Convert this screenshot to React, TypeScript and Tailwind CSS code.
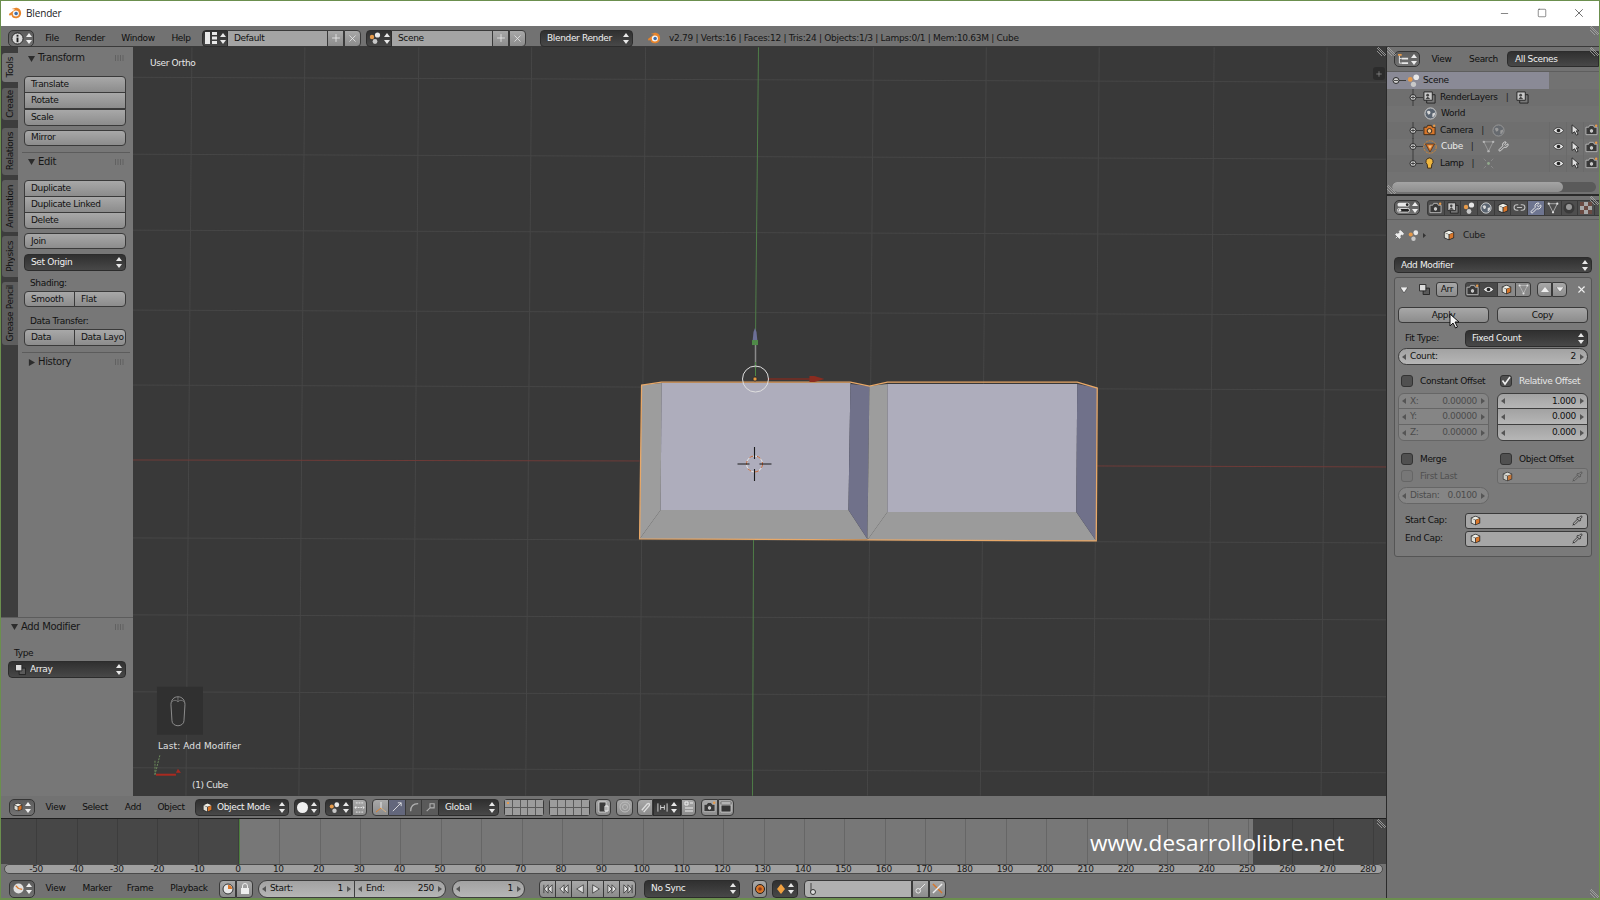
import type { ReactNode } from 'react'
import { Link2, Minus, Pin, Pipette, Plus, Square, Wrench, X } from 'lucide-react'

const btnBg = 'bg-linear-to-b from-[#a8a8a8] to-[#8c8c8c] border border-[#3a3a3a] text-[#111]'
const midBg = 'bg-linear-to-b from-[#5c5c5c] to-[#727272] border border-[#353535] text-[#eee]'
const darkBg = 'bg-linear-to-b from-[#303030] to-[#484848] border border-[#2c2c2c] text-[#f0f0f0]'
const numBg = 'bg-linear-to-b from-[#a2a2a2] to-[#b6b6b6] border border-[#3e3e3e] text-[#111]'

function UpDown({ color = '#e8e8e8' }: { color?: string }) {
  return (
    <svg width="6" height="11" viewBox="0 0 6 11" className="flex-none">
      <path d="M3 0 6 4H0ZM3 11 0 7h6Z" fill={color} />
    </svg>
  )
}

function Tri({ dir }: { dir: 'l' | 'r' }) {
  return (
    <svg width="4" height="6" viewBox="0 0 4 6" className="flex-none">
      <path d={dir === 'l' ? 'M4 0v6L0 3Z' : 'M0 0v6l4-3Z'} fill="#555" />
    </svg>
  )
}

function BlenderLogo({ s = 15 }: { s?: number }) {
  return (
    <svg width={s} height={s} viewBox="0 0 16 16" className="flex-none">
      <path d="M1 9 8 4 4 3.500 9 2c3.500 0 6 2.500 6 6s-2.500 6-6 6-5-2-5-4L2 11Z" fill="#e8842a" />
      <circle cx="9" cy="8.500" r="3.500" fill="#f4f4f4" />
      <circle cx="9.300" cy="8.500" r="2" fill="#3f6da8" />
    </svg>
  )
}

function CubeIcon({ s = 12 }: { s?: number }) {
  return (
    <svg width={s} height={s} viewBox="0 0 14 14" className="flex-none">
      <path d="M7 1 13 3.500v7L7 13 1 10.500v-7Z" fill="#2a2a2a" />
      <path d="M7 2 12 4 7 6 2 4Z" fill="#f0f0e8" />
      <path d="M2 4.500 6.500 6.500V12L2 10Z" fill="#e0e0d8" />
      <path d="M12 4.500 7.500 6.500V12L12 10Z" fill="#d8762a" />
    </svg>
  )
}

function CubeObjIcon() {
  return (
    <svg width="14" height="14" viewBox="0 0 14 14" className="flex-none">
      <circle cx="7" cy="7" r="6.200" fill="none" stroke="#d8862e" strokeDasharray="2 1" />
      <path d="M2.500 4h9L7 12Z" fill="#d8762a" stroke="#4a2a10" strokeWidth="0.700" />
      <path d="M5 5.500h4L7 9Z" fill="#f0c080" />
    </svg>
  )
}

function InfoIcon() {
  return (
    <svg width="13" height="13" viewBox="0 0 14 14" className="flex-none">
      <circle cx="7" cy="7" r="6" fill="#d8d8d8" stroke="#1c1c1c" />
      <rect x="6" y="3" width="2" height="2" fill="#1c1c1c" />
      <rect x="6" y="6" width="2" height="5" fill="#1c1c1c" />
    </svg>
  )
}

function LayoutIcon() {
  return (
    <svg width="12" height="12" viewBox="0 0 12 12" className="flex-none">
      <path d="M0 0h5v12H0ZM7 0h5v3H7ZM7 4.500h5v3H7ZM7 9h5v3H7Z" fill="#e8e8e8" />
    </svg>
  )
}

function SceneIcon({ s = 12 }: { s?: number }) {
  return (
    <svg width={s} height={s} viewBox="0 0 12 12" className="flex-none">
      <circle cx="8.500" cy="3" r="2.600" fill="#e8e8e8" />
      <circle cx="3" cy="5" r="2.200" fill="#e69a4a" />
      <circle cx="6" cy="9.500" r="2.400" fill="#c8c8c8" />
    </svg>
  )
}

function OutlinerIcon() {
  return (
    <svg width="11" height="12" viewBox="0 0 12 13" className="flex-none">
      <path d="M0 1h4v2H0Z" fill="#e69a4a" />
      <path d="M4 5h7v2H4ZM4 10h7v2H4Z" fill="#e8e8e8" />
      <path d="M1.500 3v8H4M1.500 6H4" stroke="#e8e8e8" fill="none" />
    </svg>
  )
}

function PropsIcon() {
  return (
    <svg width="13" height="11" viewBox="0 0 14 11" className="flex-none">
      <rect x="0.500" y="0.500" width="13" height="4" rx="2" fill="#e8e8e8" />
      <circle cx="11" cy="2.500" r="1.500" fill="#222" />
      <rect x="0.500" y="6.500" width="13" height="4" rx="2" fill="#222" stroke="#e8e8e8" />
      <circle cx="3" cy="8.500" r="1.500" fill="#e8e8e8" />
    </svg>
  )
}

function CameraIcon({ orange = false }: { orange?: boolean }) {
  return (
    <svg width="13" height="12" viewBox="0 0 14 12" className="flex-none">
      <path d="M1 3h3l1-2h4l1 2h3v8H1Z" fill={orange ? '#d8762a' : '#3a3a3a'} stroke={orange ? '#3a2a1a' : '#b8b8b8'} />
      <circle cx="7" cy="7" r="2.500" fill={orange ? '#f0c080' : '#c8c8c8'} stroke="#222" />
      <circle cx="12" cy="1.500" r="1.300" fill="#e69a4a" />
    </svg>
  )
}

function LayersIcon({ s = 13 }: { s?: number }) {
  return (
    <svg width={s} height={s} viewBox="0 0 14 14" className="flex-none">
      <path d="M4 4h9v9H4Z" fill="#777" stroke="#222" />
      <path d="M1 1h9v9H1Z" fill="#c8c8c8" stroke="#222" />
      <circle cx="5" cy="4.500" r="1.500" fill="#444" />
      <path d="M2.500 9 5 6l3 3Z" fill="#444" />
    </svg>
  )
}

function WorldIcon({ s = 13, faded = false }: { s?: number; faded?: boolean }) {
  return (
    <svg width={s} height={s} viewBox="0 0 14 14" className="flex-none" opacity={faded ? 0.4 : 1}>
      <circle cx="7" cy="7" r="6" fill="#5a6470" stroke="#d8d8d8" />
      <path d="M3 5c2-2 4-1 4 1S4 9 4 7Zm6 2 3-1c0 3-1 5-3 5Z" fill="#d8d8d8" />
    </svg>
  )
}

function MeshIcon({ s = 13, faded = false }: { s?: number; faded?: boolean }) {
  return (
    <svg width={s} height={s} viewBox="0 0 14 14" className="flex-none" opacity={faded ? 0.6 : 1}>
      <path d="M2 2h10L7 12Z" fill="none" stroke="#c0c0c0" strokeWidth="0.900" />
      <circle cx="2" cy="2" r="1.300" fill="#e0e0e0" />
      <circle cx="12" cy="2" r="1.300" fill="#e0e0e0" />
      <circle cx="7" cy="12" r="1.300" fill="#e0e0e0" />
    </svg>
  )
}

function LampDataIcon() {
  return (
    <svg width="13" height="13" viewBox="0 0 14 14" className="flex-none" opacity={0.6}>
      <circle cx="7" cy="7" r="1.500" fill="#a8d0a0" />
      <path d="M2 2 4 4M12 2l-2 2M2 12l2-2M12 12l-2-2" stroke="#c8c8c8" strokeDasharray="1 1" />
    </svg>
  )
}

function ArrayIcon() {
  return (
    <svg width="11" height="11" viewBox="0 0 12 12" className="flex-none">
      <path d="M4.500 4.500h7v7h-7Z" fill="#5a5a5a" stroke="#222" />
      <path d="M0.500 0.500h7v7h-7Z" fill="#dcdcdc" stroke="#222" />
    </svg>
  )
}

function Eye() {
  return (
    <svg width="11" height="9" viewBox="0 0 14 10" className="flex-none">
      <path d="M0.500 5C4 0 10 0 13.500 5 10 10 4 10 0.500 5Z" fill="#e0e0e0" stroke="#2a2a2a" />
      <circle cx="7" cy="5" r="2.300" fill="#222" />
    </svg>
  )
}

function Arrow() {
  return (
    <svg width="9" height="12" viewBox="0 0 10 14" className="flex-none">
      <path d="M1 1v10l3-2 2 4 2-1-2-4h3Z" fill="#e0e0e0" stroke="#222" />
    </svg>
  )
}

function Corner({ className }: { className: string }) {
  return (
    <svg width="9" height="9" viewBox="0 0 9 9" className={`absolute ${className}`}>
      <path d="M0 1 8 9M0 4 5 9M1 0 9 8" stroke="#a8a8a8" strokeWidth="0.800" />
    </svg>
  )
}

function Grip() {
  return (
    <svg width="9" height="6" viewBox="0 0 9 6" className="flex-none">
      <path d="M0 1h1M2.500 1h1M5 1h1M7.500 1h1M0 3h1M2.500 3h1M5 3h1M7.500 3h1M0 5h1M2.500 5h1M5 5h1M7.500 5h1" stroke="#4d4d4d" />
    </svg>
  )
}

function Menu({ label, w }: { label: string; w: string }) {
  return <span className={`flex-none text-center text-[#0e0e0e] ${w}`}>{label}</span>
}

function IconCell({ children, className = '' }: { children: ReactNode; className?: string }) {
  return (
    <div className={`flex flex-none items-center justify-center gap-[2px] ${btnBg} ${className}`}>{children}</div>
  )
}

function EditorBtn({ children, className = '' }: { children: ReactNode; className?: string }) {
  return (
    <div className={`flex flex-none items-center justify-center gap-[2px] rounded-[5px] ${midBg} ${className}`}>
      {children}
    </div>
  )
}

function Selector({ icon, label, w }: { icon: ReactNode; label: string; w: string }) {
  return (
    <div className="flex h-[17px] flex-none">
      <div className={`flex w-[26px] items-center justify-center gap-[3px] rounded-l-[4px] ${darkBg}`}>
        {icon}
        <UpDown />
      </div>
      <div className={`flex items-center bg-[#a4a4a4] border-y border-[#3a3a3a] pl-[6px] text-[#111] ${w}`}>{label}</div>
      <IconCell className="w-[17px]">
        <Plus size={12} strokeWidth={1.6} color="#eee" />
      </IconCell>
      <IconCell className="w-[17px] rounded-r-[4px]">
        <X size={11} strokeWidth={1.6} color="#eee" />
      </IconCell>
    </div>
  )
}

function Dropdown({ label, icon, className = '' }: { label: string; icon?: ReactNode; className?: string }) {
  return (
    <div className={`flex items-center gap-[4px] rounded-[4px] pl-[6px] pr-[3px] ${darkBg} ${className}`}>
      {icon}
      <span className="flex-1 truncate">{label}</span>
      <UpDown />
    </div>
  )
}

function Btn({ label, className = '', center = false }: { label: string; className?: string; center?: boolean }) {
  return (
    <div className={`flex h-[16px] items-center px-[6px] ${btnBg} ${center ? 'justify-center' : ''} ${className}`}>
      {label}
    </div>
  )
}

function PanelHead({ label, open = true, className = '' }: { label: string; open?: boolean; className?: string }) {
  return (
    <div className={`flex items-center pl-[10px] pr-[9px] text-[10px] text-[#161616] ${className}`}>
      <svg width="7" height="7" viewBox="0 0 8 8" className="flex-none">
        <path d={open ? 'M0 1h8L4 8Z' : 'M1 0v8l7-4Z'} fill="#2c2c2c" />
      </svg>
      <span className="ml-[3px] flex-1">{label}</span>
      <Grip />
    </div>
  )
}

const tabs = [
  { label: 'Tools', cls: 'h-[29px] mt-[6px] bg-[#777777]' },
  { label: 'Create', cls: 'h-[32px] mt-[6px] bg-[#5e5e5e]' },
  { label: 'Relations', cls: 'h-[47px] mt-[8px] bg-[#5e5e5e]' },
  { label: 'Animation', cls: 'h-[52px] mt-[5px] bg-[#5e5e5e]' },
  { label: 'Physics', cls: 'h-[41px] mt-[4px] bg-[#5e5e5e]' },
  { label: 'Grease Pencil', cls: 'h-[63px] mt-[5px] bg-[#5e5e5e]' },
]

function ToolShelf() {
  return (
    <div className="flex w-[132px] flex-none flex-col bg-[#777777] text-[#111]">
      <div className="flex h-[570px] flex-none">
        <div className="flex w-[17px] flex-none flex-col bg-[#3d3d3d] pl-[1px]">
          {tabs.map((t) => (
            <div key={t.label} className={`flex flex-none items-center justify-center rounded-l-[3px] ${t.cls}`}>
              <span className="rotate-180 [writing-mode:vertical-rl]">{t.label}</span>
            </div>
          ))}
        </div>
        <div className="flex flex-1 flex-col">
          <PanelHead label="Transform" className="h-[22px]" />
          <div className="ml-[6px] mt-[7px] w-[102px]">
            <Btn label="Translate" className="h-[17px] rounded-t-[4px]" />
            <Btn label="Rotate" className="-mt-px h-[17px]" />
            <Btn label="Scale" className="-mt-[0.500px] h-[17px] rounded-b-[4px]" />
            <Btn label="Mirror" className="mt-[4px] rounded-[4px]" />
          </div>
          <div className="ml-[4px] mr-[3px] mt-[6px] h-px bg-[#5c5c5c]" />
          <PanelHead label="Edit" className="h-[18px]" />
          <div className="ml-[6px] mt-[9px] w-[102px]">
            <Btn label="Duplicate" className="h-[17px] rounded-t-[4px]" />
            <Btn label="Duplicate Linked" className="-mt-px h-[17px]" />
            <Btn label="Delete" className="-mt-[0.500px] h-[17px] rounded-b-[4px]" />
            <Btn label="Join" className="mt-[4px] rounded-[4px]" />
            <Dropdown label="Set Origin" className="mt-[5px] h-[17px]" />
            <div className="mt-[6px] h-[12px] pl-[6px] leading-[12px]">Shading:</div>
            <div className="mt-[2px] flex">
              <Btn label="Smooth" className="w-[51px] rounded-l-[4px]" />
              <Btn label="Flat" className="-ml-px flex-1 rounded-r-[4px]" />
            </div>
            <div className="mt-[8px] h-[12px] pl-[6px] leading-[12px]">Data Transfer:</div>
            <div className="mt-[2px] flex">
              <Btn label="Data" className="h-[17px] w-[51px] rounded-l-[4px]" />
              <Btn label="Data Layo" className="-ml-px h-[17px] flex-1 rounded-r-[4px] pr-0" />
            </div>
          </div>
          <div className="ml-[4px] mr-[3px] mt-[6px] h-px bg-[#5c5c5c]" />
          <PanelHead label="History" open={false} className="h-[18px]" />
        </div>
      </div>
      <div className="flex flex-1 flex-col border-t border-[#5c5c5c]">
        <PanelHead label="Add Modifier" className="h-[17px]" />
        <div className="ml-[13px] mt-[12px] h-[12px] leading-[12px]">Type</div>
        <Dropdown label="Array" icon={<ArrayIcon />} className="ml-[7px] mt-[2px] h-[17px] w-[118px]" />
      </div>
    </div>
  )
}

const gridX = [192, 305, 419, 532, 646, 874, 987, 1100, 1215, 1328]
const gridY = [77, 154, 230, 310, 385, 538, 615, 692, 768]

function Viewport() {
  return (
    <div className="relative flex-1 overflow-hidden bg-[#393939]">
      <svg viewBox="133 47 1254 749" className="absolute inset-0 h-full w-full">
        {gridX.map((x) => (
          <line key={x} x1={x} y1="47" x2={x - 6} y2="796" stroke="#464646" />
        ))}
        {gridY.map((y) => (
          <line key={y} x1="133" y1={y} x2="1387" y2={y + 5} stroke="#464646" />
        ))}
        <path d="M133 460 640 461" stroke="#6e3b38" />
        <path d="M1098 466 1387 467" stroke="#6e3b38" />
        <path d="M759 47 756 337" stroke="#4f7d48" />
        <path d="M754 540 753 796" stroke="#4f7d48" />

        {/* first cube */}
        <path d="M642 385 662 383 661 510 640 539Z" fill="#9d9d9d" />
        <path d="M661 510 849 510 868 539 640 539Z" fill="#9b9b9b" />
        <path d="M662 383H851L849 510H661Z" fill="#aeadbc" />
        <path d="M851 384 870 386 868 539 849 510Z" fill="#70718a" />
        {/* second cube */}
        <path d="M870 386 888 384 888 512 868 540Z" fill="#9d9d9d" />
        <path d="M888 512 1077 512 1097 541 868 540Z" fill="#9b9b9b" />
        <path d="M888 384H1078L1077 512H888Z" fill="#aeadbc" />
        <path d="M1078 384 1098 388 1097 541 1077 512Z" fill="#70718a" />
        <path d="M642 385 662 382H851L870 386 888 382H1078L1098 388 1097 541 640 539Z" fill="none" stroke="#e8a868" strokeWidth="1.300" />

        {/* object origin and manipulator */}
        <path d="M756 337V368" stroke="#8a8a8a" strokeWidth="1.500" />
        <path d="M753 342 754 332 755.500 328 757 332 758 342Z" fill="#6c6f96" />
        <path d="M752.500 340H758.500V345H752.500Z" fill="#4f8a48" />
        <path d="M756 362V376" stroke="#4f8a48" />
        <path d="M768 379H812" stroke="#7a2c22" strokeWidth="1.500" />
        <path d="M810 376H815L825 379 815 382H810Z" fill="#8a2c20" />
        <circle cx="756" cy="379" r="13" fill="none" stroke="#dedede" />
        <circle cx="755.500" cy="379" r="2" fill="#e89a40" stroke="#222" strokeWidth="0.600" />

        {/* 3d cursor */}
        <circle cx="755" cy="464" r="8" fill="none" stroke="#e8e8e8" />
        <circle cx="755" cy="464" r="8" fill="none" stroke="#b8582a" strokeDasharray="4 4" />
        <path d="M738 464H750M760 464H772M755 447V459M755 469V481" stroke="#1a1a1a" strokeWidth="1.100" />

        {/* mouse box and mini axes */}
        <rect x="157" y="687" width="46" height="48" fill="#303030" />
        <path d="M171 705c0-5 3-8 7-8s7 3 7 8l-1 16c0 3-3 5-6 5s-6-2-6-5Z" fill="none" stroke="#8c8c8c" />
        <path d="M172 702c2-2 4-2 6 0 2-2 4-2 6 0M178 697v5" fill="none" stroke="#8c8c8c" strokeWidth="0.700" />
        <path d="M155 775V760M155 775 160 755" stroke="#6a8a5a" strokeDasharray="2 1" />
        <path d="M156 775H176" stroke="#a82a20" strokeWidth="2" />
        <path d="M178 769 181 773H176Z" fill="#a82a20" />
      </svg>

      <span className="absolute left-[17px] top-[12px] text-[#e8e8e8]">User Ortho</span>
      <span className="absolute left-[25px] top-[695px] tracking-[0.1px] text-[#e0e0e0]">Last: Add Modifier</span>
      <span className="absolute left-[59px] top-[734px] text-[#e0e0e0]">(1) Cube</span>
      <div className="absolute right-[1px] top-[20px] flex h-[13px] w-[12px] items-center justify-center rounded-[3px] bg-[#2c2c2c]">
        <Plus size={8} strokeWidth={2} color="#999" />
      </div>
      <Corner className="right-0 top-0" />
    </div>
  )
}

function LayerGrid({ className, dot = false }: { className: string; dot?: boolean }) {
  return (
    <div className={`relative grid h-[17px] flex-none grid-cols-5 grid-rows-2 gap-px rounded-[3px] border border-[#3a3a3a] bg-[#5a5a5a] ${className}`}>
      {Array.from({ length: 10 }).map((_, i) => (
        <span key={i} className="bg-[#9c9c9c]" />
      ))}
      {dot && <span className="absolute left-[2px] top-[2px] h-[2px] w-[2px] bg-[#e69a4a]" />}
    </div>
  )
}

function Header3D() {
  return (
    <div className="flex h-[22px] flex-none items-center bg-[#727272]">
      <EditorBtn className="ml-[8px] h-[17px] w-[26px]">
        <CubeIcon s={10} />
        <UpDown color="#eee" />
      </EditorBtn>
      <Menu label="View" w="w-[41px]" />
      <Menu label="Select" w="w-[38px]" />
      <Menu label="Add" w="w-[38px]" />
      <Menu label="Object" w="w-[38px]" />
      <Dropdown label="Object Mode" icon={<CubeIcon s={11} />} className="ml-[5px] h-[17px] w-[94px] flex-none pl-[4px]" />
      <div className={`ml-[5px] flex h-[17px] w-[26px] flex-none items-center justify-center gap-[3px] rounded-[4px] ${darkBg}`}>
        <span className="h-[11px] w-[11px] rounded-full bg-[#f0f0f0]" />
        <UpDown />
      </div>
      <div className={`ml-[5px] flex h-[17px] w-[27px] flex-none items-center justify-center gap-[3px] rounded-l-[4px] ${darkBg}`}>
        <SceneIcon s={11} />
        <UpDown />
      </div>
      <IconCell className="h-[17px] w-[15px] rounded-r-[4px]">
        <svg width="11" height="11" viewBox="0 0 12 12">
          <path d="M1 6h10M1 6l2-2M1 6l2 2M11 6 9 4M11 6 9 8M2 1h8M2 11h8" stroke="#eee" fill="none" strokeDasharray="2 1" />
        </svg>
      </IconCell>
      <div className="ml-[5px] flex h-[17px] flex-none">
        <IconCell className="w-[17px] rounded-l-[4px]">
          <svg width="12" height="12" viewBox="0 0 12 12">
            <path d="M6 7V1" stroke="#e8e8e8" />
            <path d="M6 7 1 11" stroke="#e0802a" />
            <path d="M6 7 11 11" stroke="#d8b080" />
          </svg>
        </IconCell>
        <div className="flex w-[17px] items-center justify-center border-y border-r border-[#3a3a3a] bg-[#63677c]">
          <svg width="10" height="10" viewBox="0 0 12 12">
            <path d="M1 11 11 1M7 1h4v4" stroke="#eee" fill="none" />
          </svg>
        </div>
        <div className="flex w-[16px] items-center justify-center border-y border-r border-[#3a3a3a] bg-[#5a5a5a]">
          <svg width="10" height="10" viewBox="0 0 12 12">
            <path d="M2 11C2 5 5 2 11 2" stroke="#b0b0b0" fill="none" strokeWidth="1.500" />
          </svg>
        </div>
        <div className="flex w-[16px] items-center justify-center border-y border-[#3a3a3a] bg-[#5a5a5a]">
          <svg width="10" height="10" viewBox="0 0 12 12">
            <path d="M2 11 6 7V2h5v5H6" stroke="#b0b0b0" fill="none" strokeWidth="1.300" />
          </svg>
        </div>
      </div>
      <Dropdown label="Global" className="h-[17px] w-[61px] flex-none rounded-l-none" />
      <LayerGrid className="ml-[5px] w-[40px]" dot />
      <LayerGrid className="ml-[5px] w-[41px]" />
      <IconCell className="ml-[5px] h-[17px] w-[16px] rounded-[4px]">
        <svg width="11" height="12" viewBox="0 0 11 12">
          <path d="M1 1h7v10H1Z" fill="#3a3a3a" stroke="#ddd" strokeWidth="0.800" />
          <path d="M7 5h3v5H7Z" fill="none" stroke="#eee" />
        </svg>
      </IconCell>
      <IconCell className="ml-[5px] h-[17px] w-[17px] rounded-[4px]">
        <svg width="12" height="12" viewBox="0 0 12 12">
          <circle cx="6" cy="6" r="5" fill="none" stroke="#bbb" />
          <circle cx="6" cy="6" r="2.500" fill="none" stroke="#bbb" />
        </svg>
      </IconCell>
      <div className="ml-[4px] flex h-[17px] flex-none">
        <IconCell className="w-[16px] rounded-l-[4px]">
          <svg width="11" height="11" viewBox="0 0 12 12">
            <path d="M2 9 8 2c2-1 3 0 2 2L4 11" fill="none" stroke="#ddd" strokeWidth="1.500" />
          </svg>
        </IconCell>
        <div className={`flex w-[28px] items-center justify-center gap-[3px] ${darkBg}`}>
          <svg width="11" height="9" viewBox="0 0 12 9">
            <path d="M1 0v9M4 2v5M8 2v5M11 0v9M4 4.500h4" stroke="#ddd" fill="none" />
          </svg>
          <UpDown />
        </div>
        <IconCell className="w-[15px] rounded-r-[4px]">
          <svg width="10" height="12" viewBox="0 0 10 12">
            <path d="M1 1h3v3H1ZM6 2h3M1 7h8M1 10h8" stroke="#eee" fill="none" />
          </svg>
        </IconCell>
      </div>
      <div className="ml-[5px] flex h-[17px] flex-none">
        <IconCell className="w-[17px] rounded-l-[4px]">
          <CameraIcon />
        </IconCell>
        <IconCell className="w-[16px] rounded-r-[4px]">
          <svg width="12" height="12" viewBox="0 0 12 12">
            <path d="M1 4h10v7H1Z" fill="#333" stroke="#ddd" strokeWidth="0.700" />
            <path d="M1 1 11 1 11 3 1 3Z" fill="#ddd" stroke="#333" strokeWidth="0.500" />
          </svg>
        </IconCell>
      </div>
    </div>
  )
}

function Timeline() {
  return (
    <div className="relative flex h-[46px] flex-none overflow-hidden border-t border-[#1e1e1e]">
      <div className="flex w-[238px] flex-none justify-end bg-[#474747]">
        {Array.from({ length: 6 }).map((_, i) => (
          <span key={i} className="w-[40.36px] flex-none border-r border-[#3d3d3d]" />
        ))}
      </div>
      <div className="w-px flex-none bg-[#4d7f3e]" />
      <div className="flex w-[1013px] flex-none overflow-hidden bg-[#777777]">
        {Array.from({ length: 26 }).map((_, i) => (
          <span key={i} className="w-[40.36px] flex-none border-r border-[#666666]" />
        ))}
      </div>
      <div className="flex flex-1 overflow-hidden bg-[#474747]">
        {Array.from({ length: 4 }).map((_, i) => (
          <span key={i} className="w-[40.36px] flex-none border-r border-[#3d3d3d]" />
        ))}
      </div>
      <span className="absolute left-[1089px] top-[11px] font-['Open_Sans',sans-serif] text-[22.500px] leading-[26px] tracking-[0.1px] text-white">
        www.desarrollolibre.net
      </span>
      <Corner className="right-0 top-0" />
    </div>
  )
}

const frames = Array.from({ length: 34 }, (_, i) => (i - 5) * 10)

function Ruler() {
  return (
    <div className="flex h-[10px] flex-none items-center bg-[#727272]">
      <div className="ml-[3px] flex h-[10px] w-[1379px] flex-none overflow-hidden rounded-full border border-[#4a4a4a] bg-[#a0a0a0] pl-[11px] leading-[9px]">
        {frames.map((f) => (
          <span key={f} className="w-[40.36px] flex-none text-center text-[#1a1a1a]">
            {f}
          </span>
        ))}
      </div>
    </div>
  )
}

function NumField({
  label,
  value,
  className = '',
  faded = false,
}: {
  label?: string
  value: string
  className?: string
  faded?: boolean
}) {
  return (
    <div
      className={`flex h-[16px] items-center gap-[4px] px-[3px] ${
        faded ? 'bg-[#858585] border border-[#666] text-[#4c4c4c]' : numBg
      } ${className}`}
    >
      <Tri dir="l" />
      {label && <span className="flex-none">{label}</span>}
      <span className="flex-1 text-right">{value}</span>
      <Tri dir="r" />
    </div>
  )
}

function BottomHeader() {
  return (
    <div className="flex h-[24px] flex-none items-center bg-[#727272] pt-[5px]">
      <EditorBtn className="ml-[8px] h-[18px] w-[26px]">
        <svg width="11" height="11" viewBox="0 0 12 12">
          <circle cx="6" cy="6" r="5.500" fill="#e0e0e0" />
          <path d="M6 6 3 3M6 6l4 1" stroke="#d8762a" strokeWidth="1.300" />
        </svg>
        <UpDown color="#eee" />
      </EditorBtn>
      <Menu label="View" w="w-[41px]" />
      <Menu label="Marker" w="w-[42px]" />
      <Menu label="Frame" w="w-[44px]" />
      <Menu label="Playback" w="w-[54px]" />
      <IconCell className="ml-[3px] h-[18px] w-[17px] rounded-l-[4px]">
        <svg width="12" height="12" viewBox="0 0 12 12">
          <circle cx="6" cy="6" r="5" fill="#e8e8e8" stroke="#333" />
          <path d="M6 6V2A4 4 0 0 1 10 6Z" fill="#d8762a" />
        </svg>
      </IconCell>
      <IconCell className="h-[18px] w-[17px] rounded-r-[4px]">
        <svg width="10" height="12" viewBox="0 0 10 12">
          <path d="M2.500 5V3a2.500 2.500 0 0 1 5 0v2" fill="none" stroke="#eee" />
          <rect x="1" y="5" width="8" height="6" fill="#eee" />
        </svg>
      </IconCell>
      <NumField label="Start:" value="1" className="ml-[5px] h-[18px] w-[97px] flex-none rounded-l-full" />
      <NumField label="End:" value="250" className="-ml-px h-[18px] w-[92px] flex-none rounded-r-full" />
      <NumField value="1" className="ml-[6px] h-[18px] w-[73px] flex-none rounded-full" />
      <div className="ml-[14px] flex h-[18px] w-[98px] flex-none">
        {[
          'M1 1v10M11 1 6 6l5 5ZM6 1 1.500 6 6 11Z',
          'M6 1 1 6l5 5ZM11 1 6 6l5 5Z',
          'M10 1 2 6l8 5Z',
          'M2 1l8 5-8 5Z',
          'M1 1l5 5-5 5ZM6 1l5 5-5 5Z',
          'M11 1v10M1 1l5 5-5 5ZM6 1l4.500 5L6 11Z',
        ].map((d, i) => (
          <IconCell key={d} className={`w-[17px] -mr-px ${i === 0 ? 'rounded-l-[4px]' : ''} ${i === 5 ? 'rounded-r-[4px]' : ''}`}>
            <svg width="10" height="12" viewBox="0 0 12 12">
              <path d={d} fill="#e0e0e0" stroke="#222" strokeWidth="0.800" />
            </svg>
          </IconCell>
        ))}
      </div>
      <Dropdown label="No Sync" className="ml-[7px] h-[18px] w-[96px] flex-none" />
      <IconCell className="ml-[12px] h-[18px] w-[15px] rounded-[4px]">
        <svg width="10" height="10" viewBox="0 0 10 10">
          <circle cx="5" cy="5" r="4.500" fill="#d8762a" stroke="#222" />
          <circle cx="5" cy="5" r="1.800" fill="#8a3a1a" />
        </svg>
      </IconCell>
      <div className={`ml-[5px] flex h-[18px] w-[26px] flex-none items-center justify-center gap-[3px] rounded-[4px] ${darkBg}`}>
        <svg width="8" height="10" viewBox="0 0 8 10">
          <path d="M4 0 8 5 4 10 0 5Z" fill="#f0a040" />
        </svg>
        <UpDown />
      </div>
      <div className="ml-[6px] flex h-[18px] flex-none">
        <div className="flex w-[108px] items-center rounded-l-[4px] border border-[#3a3a3a] bg-[#b0b0b0] pl-[3px]">
          <svg width="10" height="14" viewBox="0 0 10 14">
            <path d="M3 1v9" stroke="#444" />
            <circle cx="5" cy="10" r="2.500" fill="#ddd" stroke="#333" />
          </svg>
        </div>
        <IconCell className="w-[17px]">
          <svg width="11" height="11" viewBox="0 0 12 12">
            <circle cx="3.500" cy="8.500" r="2.500" fill="none" stroke="#eee" />
            <path d="M5 7 11 1" stroke="#eee" />
          </svg>
        </IconCell>
        <IconCell className="w-[17px] rounded-r-[4px]">
          <svg width="11" height="11" viewBox="0 0 12 12">
            <path d="M1 1 11 11" stroke="#d8762a" strokeWidth="1.500" />
            <path d="M11 1 1 11" stroke="#eee" strokeWidth="1.500" />
          </svg>
        </IconCell>
      </div>
    </div>
  )
}

function TreeNode({ root = false, line = 'both' }: { root?: boolean; line?: 'both' | 'top' | 'none' }) {
  return (
    <svg width="16" height="17" viewBox="0 0 16 17" className="flex-none">
      {line !== 'none' && <path d={line === 'both' ? 'M6 0V17' : 'M6 0V8.500'} stroke="#3c3c3c" />}
      <path d="M6 8.500H16" stroke="#3c3c3c" />
      <circle cx="6" cy="8.500" r="3" fill="#d0d0d0" stroke="#2a2a2a" />
      <path d={root ? 'M4 8.500H8' : 'M4 8.500H8M6 6.500V10.500'} stroke="#2a2a2a" strokeWidth="0.800" />
    </svg>
  )
}

function RowIcons() {
  return (
    <div className="flex h-full flex-none">
      <div className="flex w-[17px] items-center justify-center border-l border-[#6a6a6a]">
        <Eye />
      </div>
      <div className="flex w-[17px] items-center justify-center border-l border-[#6a6a6a]">
        <Arrow />
      </div>
      <div className="flex w-[16px] items-center justify-center overflow-hidden border-l border-[#6a6a6a]">
        <CameraIcon />
      </div>
    </div>
  )
}

function Outliner() {
  return (
    <div className="relative flex h-[147px] flex-none flex-col bg-[#727272]">
      <div className="flex h-[25px] flex-none items-center border-b border-[#5e5e5e]">
        <EditorBtn className="ml-[7px] h-[16px] w-[26px]">
          <OutlinerIcon />
          <UpDown color="#eee" />
        </EditorBtn>
        <Menu label="View" w="w-[43px]" />
        <Menu label="Search" w="w-[41px]" />
        <div className={`ml-[3px] flex h-[16px] flex-1 items-center rounded-l-[4px] pl-[7px] ${darkBg}`}>All Scenes</div>
      </div>
      <div className="flex-1">
        <div className="flex h-[17px] items-center">
          <div className="flex h-full w-[162px] flex-none items-center bg-[#8a8a96] pl-[3px]">
            <TreeNode root line="none" />
            <span className="ml-px">
              <SceneIcon s={13} />
            </span>
            <span className="ml-[3px]">Scene</span>
          </div>
        </div>
        <div className="flex h-[16.500px] items-center bg-[#6f6f6f]">
          <div className="flex w-[162px] flex-none items-center pl-[20px]">
            <TreeNode />
            <LayersIcon />
            <span className="ml-[4px]">RenderLayers</span>
            <span className="mx-[8px] text-[#222]">|</span>
            <LayersIcon />
          </div>
        </div>
        <div className="flex h-[16.500px] items-center">
          <div className="flex w-[162px] flex-none items-center pl-[37px]">
            <WorldIcon />
            <span className="ml-[4px]">World</span>
          </div>
        </div>
        {[
          { name: 'Camera', icon: <CameraIcon orange />, cls: 'text-[#111]', sub: <WorldIcon faded /> },
          {
            name: 'Cube',
            icon: <CubeObjIcon />,
            cls: 'text-[#e8e8e8]',
            sub: (
              <>
                <MeshIcon faded />
                <Wrench size={11} color="#e0e0e0" className="ml-[3px]" />
              </>
            ),
          },
          {
            name: 'Lamp',
            icon: (
              <svg width="13" height="13" viewBox="0 0 14 14" className="flex-none">
                <path d="M7 1a4 4 0 0 1 2.500 7L9 12H5L4.500 8A4 4 0 0 1 7 1Z" fill="#f0b840" stroke="#3a2a1a" />
              </svg>
            ),
            cls: 'text-[#111]',
            sub: <LampDataIcon />,
          },
        ].map((r, i) => (
          <div key={r.name} className={`flex h-[16.500px] items-center ${i === 0 || i === 2 ? 'bg-[#6f6f6f]' : ''}`}>
            <div className="flex w-[162px] flex-none items-center pl-[20px]">
              <TreeNode line={i === 2 ? 'top' : 'both'} />
              {r.icon}
              <span className={`ml-[4px] ${r.cls}`}>{r.name}</span>
              <span className="mx-[8px] text-[#222]">|</span>
              {r.sub}
            </div>
            <RowIcons />
          </div>
        ))}
      </div>
      <div className="ml-[5px] mr-[3px] mb-[2px] flex h-[10px] flex-none overflow-hidden rounded-full bg-[#5a5a5a]">
        <div className="w-[171px] rounded-full bg-linear-to-b from-[#a4a4a4] to-[#8e8e8e]" />
      </div>
      <Corner className="left-0 top-0" />
      <Corner className="right-0 top-0" />
      <Corner className="bottom-0 left-0" />
    </div>
  )
}

const propTabs: ReactNode[] = [
  <CameraIcon key="c" />,
  <LayersIcon key="l" s={12} />,
  <SceneIcon key="s" />,
  <WorldIcon key="w" s={12} />,
  <CubeIcon key="o" />,
  <Link2 key="k" size={13} color="#c0c0c0" />,
  <Wrench key="m" size={12} color="#e8e8e8" />,
  <MeshIcon key="d" s={12} />,
  <svg key="t" width="12" height="12" viewBox="0 0 12 12">
    <circle cx="6" cy="6" r="5.500" fill="#3a3a3a" />
    <circle cx="6" cy="5" r="3" fill="#999" />
  </svg>,
  <svg key="x" width="12" height="12" viewBox="0 0 12 12">
    <path d="M0 0h12v12H0Z" fill="#a8a8a8" />
    <path d="M0 0h4v4H0ZM8 0h4v4H8ZM4 4h4v4H4ZM0 8h4v4H0ZM8 8h4v4H8Z" fill="#6a4a42" />
  </svg>,
  <svg key="p" width="12" height="12" viewBox="0 0 12 12">
    <path d="M2 2 10 10M10 2 2 10" stroke="#ddd" />
    <circle cx="6" cy="6" r="2" fill="#ddd" />
  </svg>,
]

function Check({ checked = false, faded = false }: { checked?: boolean; faded?: boolean }) {
  return (
    <span
      className={`flex h-[12px] w-[12px] flex-none items-center justify-center rounded-[3px] border ${
        faded ? 'border-[#666] bg-[#777777]' : 'border-[#333] bg-[#505050]'
      }`}
    >
      {checked && (
        <svg width="10" height="10" viewBox="0 0 10 10">
          <path d="M1.500 4.500 4 8 9 1" fill="none" stroke="#eee" strokeWidth="1.600" />
        </svg>
      )}
    </span>
  )
}

function ObjField() {
  return (
    <div className="flex h-[16px] flex-1 items-center justify-between rounded-[3px] border border-[#3a3a3a] bg-[#a6a6a6] px-[4px]">
      <CubeIcon s={11} />
      <Pipette size={11} color="#1c1c1c" strokeWidth={1.6} />
    </div>
  )
}

function ModifierPanel() {
  return (
    <div className="mt-[4px] flex h-[280px] flex-col rounded-[3px] border border-[#555555] bg-[#7a7a7a] px-[3px]">
      <div className="mt-[2px] flex h-[19px] flex-none items-center">
        <svg width="8" height="6" viewBox="0 0 8 6" className="ml-[2px] flex-none">
          <path d="M0 0h8L4 6Z" fill="#eee" stroke="#222" strokeWidth="0.500" />
        </svg>
        <span className="ml-[11px]">
          <ArrayIcon />
        </span>
        <div className={`ml-[6px] flex h-[15px] w-[22px] flex-none items-center justify-center rounded-[3px] ${btnBg}`}>Arr</div>
        <div className="ml-[7px] flex h-[15px] flex-none">
          <div className="flex w-[15px] items-center justify-center rounded-l-[3px] border border-[#3a3a3a] bg-[#4a4a4a]">
            <CameraIcon />
          </div>
          <div className="flex w-[17px] items-center justify-center border-y border-[#3a3a3a] bg-[#4a4a4a]">
            <Eye />
          </div>
          <div className="flex w-[18px] items-center justify-center border-y border-l border-[#3a3a3a] bg-[#8a8a8a]">
            <CubeIcon s={11} />
          </div>
          <div className="flex w-[16px] items-center justify-center rounded-r-[3px] border border-[#3a3a3a] bg-[#8a8a8a]">
            <MeshIcon s={11} />
          </div>
        </div>
        <div className="ml-[6px] flex h-[15px] flex-none">
          <IconCell className="w-[15px] rounded-l-[4px]">
            <svg width="8" height="5" viewBox="0 0 8 5">
              <path d="M4 0 8 5H0Z" fill="#eee" />
            </svg>
          </IconCell>
          <IconCell className="w-[15px] rounded-r-[4px]">
            <svg width="8" height="5" viewBox="0 0 8 5">
              <path d="M4 5 8 0H0Z" fill="#eee" stroke="#222" strokeWidth="0.300" />
            </svg>
          </IconCell>
        </div>
        <X size={11} strokeWidth={2.400} color="#eee" className="ml-[9px]" />
      </div>
      <div className="mt-[8px] grid grid-cols-2 gap-x-[8px]">
        <div className="relative">
          <Btn label="Apply" center className="rounded-[4px]" />
          <svg width="11" height="16" viewBox="0 0 11 16" className="absolute left-[51px] top-[6px]">
            <path d="M1 1v12l3-3 2.500 5 2-1L6 9h4Z" fill="#f4f4f4" stroke="#111" />
          </svg>
        </div>
        <Btn label="Copy" center className="rounded-[4px]" />
      </div>
      <div className="mt-[7px] flex h-[17px] items-center">
        <span className="ml-[7px] w-[60px] flex-none">Fit Type:</span>
        <Dropdown label="Fixed Count" className="h-[17px] flex-1" />
      </div>
      <NumField label="Count:" value="2" className="mt-px h-[17px] rounded-full" />

      <div className="mt-[10px] grid grid-cols-2 gap-x-[8px]">
        <div className="flex h-[12px] items-center gap-[7px] pl-[3px]">
          <Check />
          <span>Constant Offset</span>
        </div>
        <div className="flex h-[12px] items-center gap-[7px] pl-[3px]">
          <Check checked />
          <span className="text-[#e6e6e6]">Relative Offset</span>
        </div>
      </div>
      <div className="mt-[6px] grid grid-cols-2 gap-x-[8px]">
        <div>
          <NumField faded label="X:" value="0.00000" className="rounded-t-[6px]" />
          <NumField faded label="Y:" value="0.00000" className="-mt-px h-[17px]" />
          <NumField faded label="Z:" value="0.00000" className="-mt-px h-[17px] rounded-b-[6px]" />
        </div>
        <div>
          <NumField value="1.000" className="rounded-t-[6px]" />
          <NumField value="0.000" className="-mt-px h-[17px]" />
          <NumField value="0.000" className="-mt-px h-[17px] rounded-b-[6px]" />
        </div>
      </div>

      <div className="mt-[12px] grid grid-cols-2 gap-x-[8px]">
        <div className="flex h-[12px] items-center gap-[7px] pl-[3px]">
          <Check />
          <span>Merge</span>
        </div>
        <div className="flex h-[12px] items-center gap-[7px] pl-[3px]">
          <Check />
          <span>Object Offset</span>
        </div>
      </div>
      <div className="mt-[3px] grid h-[16px] grid-cols-2 items-center gap-x-[8px]">
        <div className="flex items-center gap-[7px] pl-[3px] text-[#505050]">
          <Check faded />
          <span>First Last</span>
        </div>
        <div className="flex h-[16px] items-center justify-between rounded-[3px] border border-[#666] bg-[#858585] px-[4px] opacity-80">
          <CubeIcon s={11} />
          <Pipette size={11} color="#444" strokeWidth={1.6} />
        </div>
      </div>
      <div className="mt-[3px] grid grid-cols-2 gap-x-[8px]">
        <NumField faded label="Distan:" value="0.0100" className="h-[17px] rounded-full" />
      </div>
      <div className="mt-[8px] flex h-[17px] items-center">
        <span className="ml-[7px] w-[60px] flex-none">Start Cap:</span>
        <ObjField />
      </div>
      <div className="mt-[1px] flex h-[17px] items-center">
        <span className="ml-[7px] w-[60px] flex-none">End Cap:</span>
        <ObjField />
      </div>
    </div>
  )
}

function Properties() {
  return (
    <div className="relative flex flex-1 flex-col border-t-2 border-[#2a2a2a] bg-[#727272]">
      <div className="flex h-[24px] flex-none items-center border-b border-[#5e5e5e]">
        <EditorBtn className="ml-[7px] h-[15px] w-[26px]">
          <PropsIcon />
          <UpDown color="#eee" />
        </EditorBtn>
        <div className="ml-[7px] flex h-[16px] flex-none">
          {propTabs.map((t, i) => (
            <div
              key={i}
              className={`flex w-[17.700px] flex-none items-center justify-center border border-[#3a3a3a] ${
                i === 6 ? 'bg-[#6e7590]' : 'bg-[#4e4e4e]'
              } ${i === 0 ? 'rounded-l-[3px]' : '-ml-px'}`}
            >
              {t}
            </div>
          ))}
        </div>
      </div>
      <div className="flex h-[21px] flex-none items-end pl-[7px] text-[#1c1c1c]">
        <div className="flex items-center gap-[4px]">
          <Pin size={10} color="#eee" fill="#eee" className="rotate-45" />
          <SceneIcon s={11} />
          <svg width="3" height="5" viewBox="0 0 3 5">
            <path d="M0 0 3 2.500 0 5Z" fill="#333" />
          </svg>
          <span className="ml-[13px]">
            <CubeIcon s={12} />
          </span>
          <span className="ml-[4px]">Cube</span>
        </div>
      </div>
      <div className="mt-[16px] px-[7px]">
        <Dropdown label="Add Modifier" className="h-[16px]" />
        <ModifierPanel />
      </div>
      <Corner className="right-0 top-0" />
      <Corner className="bottom-0 right-0" />
    </div>
  )
}

export default function App() {
  return (
    <div className="flex h-[900px] w-[1600px] flex-col overflow-hidden border border-b-2 border-[#6b8f4e] bg-[#727272] font-['DejaVu_Sans',sans-serif] text-[9px] leading-none tracking-[-0.35px] text-[#111]">
      {/* window title bar */}
      <div className="flex h-[25px] flex-none items-center bg-white pb-[1px] font-['Open_Sans',sans-serif] tracking-normal">
        <span className="ml-[7px]">
          <BlenderLogo s={14} />
        </span>
        <span className="ml-[4px] text-[10px] tracking-[-0.15px] text-[#222]">Blender</span>
        <div className="ml-auto flex items-center text-[#333]">
          <span className="flex w-[38px] justify-center">
            <Minus size={11} strokeWidth={1.3} />
          </span>
          <span className="flex w-[38px] justify-center">
            <Square size={10} strokeWidth={1.3} />
          </span>
          <span className="flex w-[38px] justify-center pr-[2px]">
            <X size={14} strokeWidth={1.2} />
          </span>
        </div>
      </div>

      {/* info header */}
      <div className="relative flex h-[21px] flex-none items-center border-b border-[#3a3a3a] bg-[#727272] pt-[4px]">
        <EditorBtn className="ml-[7px] h-[17px] w-[26px]">
          <InfoIcon />
          <UpDown color="#eee" />
        </EditorBtn>
        <Menu label="File" w="w-[36px]" />
        <Menu label="Render" w="w-[40px]" />
        <Menu label="Window" w="w-[56px]" />
        <Menu label="Help" w="w-[30px]" />
        <div className="ml-[6px]">
          <Selector icon={<LayoutIcon />} label="Default" w="w-[99px]" />
        </div>
        <div className="ml-[5px]">
          <Selector icon={<SceneIcon />} label="Scene" w="w-[100px]" />
        </div>
        <Dropdown label="Blender Render" className="ml-[14px] h-[17px] w-[93px] flex-none" />
        <span className="ml-[14px]">
          <BlenderLogo s={14} />
        </span>
        <span className="ml-[8px] whitespace-nowrap tracking-[-0.29px] text-[#161616]">
          v2.79 | Verts:16 | Faces:12 | Tris:24 | Objects:1/3 | Lamps:0/1 | Mem:10.63M | Cube
        </span>
        <Corner className="right-0 top-0" />
      </div>

      <div className="flex min-h-0 flex-1">
        <div className="flex min-w-0 flex-1 flex-col border-r border-[#2a2a2a]">
          <div className="flex h-[749px] flex-none">
            <ToolShelf />
            <Viewport />
          </div>
          <Header3D />
          <Timeline />
          <Ruler />
          <BottomHeader />
        </div>
        <div className="flex w-[212px] flex-none flex-col">
          <Outliner />
          <Properties />
        </div>
      </div>
    </div>
  )
}
